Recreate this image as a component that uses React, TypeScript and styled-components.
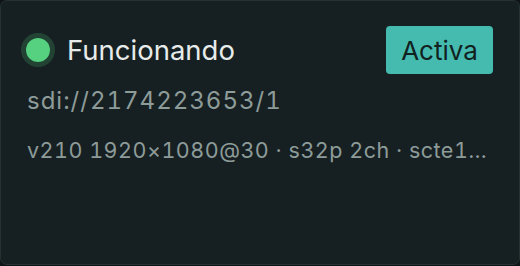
import styled, { createGlobalStyle } from "styled-components";

const Global = createGlobalStyle`
  html, body {
    margin: 0;
    padding: 0;
    background: #0f1517;
  }
  body {
    font-family: Inter, "Noto Sans", sans-serif;
  }
`;

const Card = styled.div`
  box-sizing: border-box;
  width: 520px;
  height: 265px;
  background: #162022;
  border: 1px solid #263231;
  border-radius: 7px;
  padding: 25px 26px 0 26px;
  display: flex;
  flex-direction: column;
`;

const Header = styled.div`
  display: flex;
  align-items: center;
  justify-content: space-between;
  height: 48px;
`;

const Status = styled.div`
  display: flex;
  align-items: center;
  gap: 12px;
`;

const Dot = styled.span<{ $color: string }>`
  box-sizing: border-box;
  width: 34px;
  height: 34px;
  margin-left: -6px;
  border-radius: 50%;
  background: ${(p) => p.$color};
  border: 5px solid rgba(85, 209, 127, 0.2);
  background-clip: padding-box;
`;

const StatusText = styled.span`
  font-size: 27.5px;
  color: #e7eceb;
`;

const Badge = styled.span`
  display: flex;
  align-items: center;
  justify-content: center;
  width: 107px;
  height: 48px;
  box-sizing: border-box;
  border-radius: 4px;
  background: #45bbb0;
  color: #112220;
  font-size: 26px;
`;

const Line = styled.div<{ $size: number; $spacing: number }>`
  font-size: ${(p) => p.$size}px;
  letter-spacing: ${(p) => p.$spacing}px;
  font-variant-numeric: tabular-nums;
  color: #8d9b99;
  white-space: nowrap;
  overflow: hidden;
  text-overflow: ellipsis;
`;

const Address = styled(Line)`
  margin-top: 13px;
  line-height: 28px;
`;

const Format = styled(Line)`
  margin-top: 22px;
  line-height: 26px;
`;

export default function App() {
  return (
    <>
      <Global />
      <Card>
        <Header>
          <Status>
            <Dot $color="#55d17f" />
            <StatusText>Funcionando</StatusText>
          </Status>
          <Badge>Activa</Badge>
        </Header>
        <Address $size={24} $spacing={1}>sdi://2174223653/1</Address>
        <Format $size={21.5} $spacing={0.5}>v210 1920×1080@30 · s32p 2ch · scte104 · anc</Format>
      </Card>
    </>
  );
}
